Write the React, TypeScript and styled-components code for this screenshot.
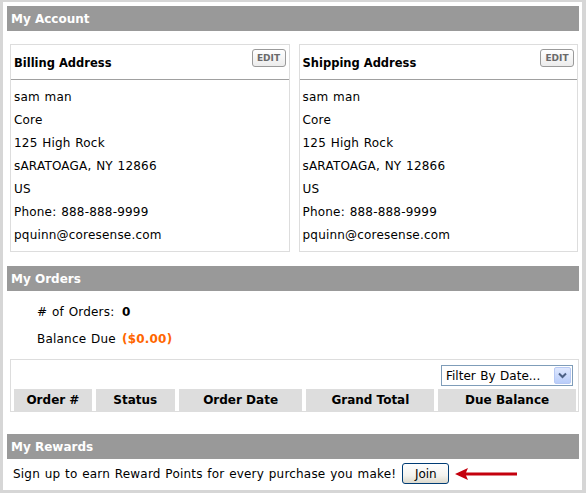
import React from "react";
import styled, { createGlobalStyle } from "styled-components";

const GlobalStyle = createGlobalStyle`
  html, body {
    margin: 0;
    padding: 0;
    background: #d6d6d6;
  }
  body {
    font-family: "DejaVu Sans", Verdana, sans-serif;
    font-size: 12px;
    letter-spacing: 0.2px;
    word-spacing: 0.7px;
    color: #000;
  }
`;

type Address = {
  name: string;
  company: string;
  street: string;
  city: string;
  country: string;
  phone: string;
  email: string;
};

const address: Address = {
  name: "sam man",
  company: "Core",
  street: "125 High Rock",
  city: "sARATOAGA, NY 12866",
  country: "US",
  phone: "Phone: 888-888-9999",
  email: "pquinn@coresense.com",
};

const columns = [
  { label: "Order #", width: 78 },
  { label: "Status", width: 79 },
  { label: "Order Date", width: 124 },
  { label: "Grand Total", width: 128 },
  { label: "Due Balance", width: 138 },
];

const AddressBox = ({ title, data }: { title: string; data: Address }) => (
  <Box>
    <BoxHead>
      <BoxTitle>{title}</BoxTitle>
      <EditButton>EDIT</EditButton>
    </BoxHead>
    <BoxBody>
      <div>{data.name}</div>
      <div>{data.company}</div>
      <div>{data.street}</div>
      <div>{data.city}</div>
      <div>{data.country}</div>
      <div>{data.phone}</div>
      <div>{data.email}</div>
    </BoxBody>
  </Box>
);

const App = () => {
  return (
    <>
      <GlobalStyle />
      <Frame>
        <Panel>
          <SectionHeader>My Account</SectionHeader>
          <AddressRow>
            <AddressBox title="Billing Address" data={address} />
            <AddressBox title="Shipping Address" data={address} />
          </AddressRow>

          <SectionHeader $top={14}>My Orders</SectionHeader>
          <Stats>
            <span># of Orders:</span>
            <strong>0</strong>
            <span>Balance Due</span>
            <Due>($0.00)</Due>
          </Stats>

          <OrdersBox>
            <FilterRow>
              <Select>
                <span>Filter By Date...</span>
                <SelectArrow>
                  <svg width="9" height="7" viewBox="0 0 9 7">
                    <path
                      d="M1 1.5 L4.5 5 L8 1.5"
                      fill="none"
                      stroke="#4d6185"
                      strokeWidth="2"
                    />
                  </svg>
                </SelectArrow>
              </Select>
            </FilterRow>
            <HeadRow>
              {columns.map((c) => (
                <HeadCell key={c.label} $w={c.width}>
                  {c.label}
                </HeadCell>
              ))}
            </HeadRow>
          </OrdersBox>

          <SectionHeader $top={22}>My Rewards</SectionHeader>
          <Rewards>
            <span>Sign up to earn Reward Points for every purchase you make!</span>
            <JoinButton>Join</JoinButton>
            <svg width="62" height="12" viewBox="0 0 62 12">
              <path d="M0 6 L13 0 L11 4.6 L62 4.6 L62 7.4 L11 7.4 L13 12 Z" fill="#c4000d" />
            </svg>
          </Rewards>
        </Panel>
      </Frame>
    </>
  );
};

const Frame = styled.div`
  width: 586px;
  height: 493px;
  box-sizing: border-box;
  padding: 2px 4px 3px 3px;
  background: #d6d6d6;
`;

const Panel = styled.div`
  height: 100%;
  box-sizing: border-box;
  background: #fff;
  padding: 4px 3px 0 4px;
`;

const SectionHeader = styled.div<{ $top?: number }>`
  height: 25px;
  line-height: 26px;
  margin-top: ${(p) => p.$top ?? 0}px;
  padding-left: 4px;
  background: #999999;
  color: #fff;
  font-weight: bold;
  font-size: 12px;
  letter-spacing: 0;
  word-spacing: 0;
`;

const AddressRow = styled.div`
  display: flex;
  gap: 9px;
  margin: 13px 1px 0 3px;
`;

const Box = styled.div`
  flex: 1;
  border: 1px solid #dddddd;
`;

const BoxHead = styled.div`
  height: 35px;
  display: flex;
  align-items: flex-start;
  justify-content: space-between;
  padding: 4px 3px 0 3px;
  box-sizing: border-box;
  border-bottom: 1px solid #a0a0a0;
`;

const BoxTitle = styled.div`
  margin-top: 5px;
  font-weight: bold;
  font-size: 11.5px;
  line-height: 18px;
  letter-spacing: 0;
  word-spacing: 0;
`;

const EditButton = styled.button`
  height: 18px;
  width: 34px;
  padding: 0;
  border: 1px solid #9a9a9a;
  border-radius: 3px;
  background: linear-gradient(#ffffff, #ececec);
  color: #6a6a6a;
  font-family: "DejaVu Sans", Verdana, sans-serif;
  font-size: 9px;
  font-weight: bold;
  line-height: 16px;
`;

const BoxBody = styled.div`
  padding: 6px 3px 4px 3px;
  line-height: 23px;
`;

const Stats = styled.div`
  display: grid;
  grid-template-columns: 85px auto;
  grid-auto-rows: 27px;
  align-items: center;
  padding: 7px 0 0 30px;
  strong {
    font-weight: bold;
  }
`;

const Due = styled.span`
  color: #ff6600;
  font-weight: bold;
`;

const OrdersBox = styled.div`
  margin: 7px 0 0 3px;
  border: 1px solid #dddddd;
  padding: 5px 2px 0 3px;
`;

const FilterRow = styled.div`
  display: flex;
  justify-content: flex-end;
  padding-right: 3px;
`;

const Select = styled.div`
  width: 132px;
  height: 21px;
  box-sizing: border-box;
  border: 1px solid #7f9db9;
  display: flex;
  align-items: center;
  justify-content: space-between;
  padding: 0 1px 0 4px;
  font-size: 12px;
  letter-spacing: 0;
`;

const SelectArrow = styled.div`
  width: 17px;
  height: 17px;
  box-sizing: border-box;
  border: 1px solid #b7c9f4;
  border-radius: 2px;
  background: linear-gradient(#dfe8fe, #b9cdfa);
  display: flex;
  align-items: center;
  justify-content: center;
`;

const HeadRow = styled.div`
  display: flex;
  gap: 4px;
  margin-top: 3px;
`;

const HeadCell = styled.div<{ $w: number }>`
  width: ${(p) => p.$w}px;
  height: 22px;
  line-height: 22px;
  background: #dddddd;
  text-align: center;
  font-weight: bold;
  font-size: 12px;
  letter-spacing: 0;
  word-spacing: 0;
`;

const Rewards = styled.div`
  display: flex;
  align-items: center;
  gap: 6px;
  padding: 4px 0 0 6px;
`;

const JoinButton = styled.button`
  width: 47px;
  height: 21px;
  padding: 0;
  border: 1px solid #003c74;
  border-radius: 3px;
  background: linear-gradient(#ffffff, #f4f3ee 60%, #dcd9cd);
  font-family: "DejaVu Sans", Verdana, sans-serif;
  font-size: 12px;
  color: #000;
`;

export default App;
